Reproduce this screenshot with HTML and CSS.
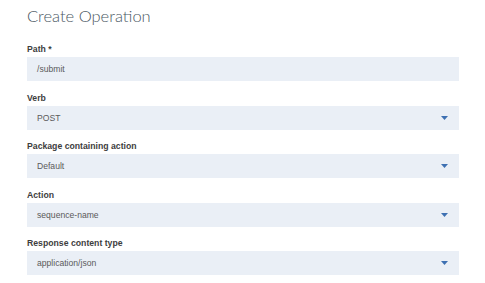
FILE: index.html
```html
<!DOCTYPE html>
<html lang="en">
<head>
  <meta charset="UTF-8">
  <meta name="viewport" content="width=device-width, initial-scale=1.0">
  <title>Create Operation</title>
  <link rel="stylesheet" href="styles.css">
</head>
<body>
  <div class="container">
    <h1>Create Operation</h1>

    <!-- Path -->
    <div class="form-item">
      <label>Path *</label>
      <div class="field">/submit</div>
    </div>

    <!-- Verb -->
    <div class="form-item">
      <label>Verb</label>
      <div class="field select">POST
        <svg class="arrow" width="7" height="4" viewBox="0 0 7 4"><path d="M0 0h7L3.5 4z" fill="#3d70b2"/></svg>
      </div>
    </div>

    <!-- Package -->
    <div class="form-item">
      <label>Package containing action</label>
      <div class="field select">Default
        <svg class="arrow" width="7" height="4" viewBox="0 0 7 4"><path d="M0 0h7L3.5 4z" fill="#3d70b2"/></svg>
      </div>
    </div>

    <!-- Action -->
    <div class="form-item">
      <label>Action</label>
      <div class="field select">sequence-name
        <svg class="arrow" width="7" height="4" viewBox="0 0 7 4"><path d="M0 0h7L3.5 4z" fill="#3d70b2"/></svg>
      </div>
    </div>

    <!-- Response content type -->
    <div class="form-item">
      <label>Response content type</label>
      <div class="field select">application/json
        <svg class="arrow" width="7" height="4" viewBox="0 0 7 4"><path d="M0 0h7L3.5 4z" fill="#3d70b2"/></svg>
      </div>
    </div>
  </div>
</body>
</html>
```

FILE: styles.css
```css
body {
  margin: 0;
  background: #fff;
  font-family: "Liberation Sans", Arial, sans-serif;
}

.container {
  width: 432px;
  padding-left: 27px;
}

h1 {
  margin: 5px 0 16px;
  font-size: 16.5px;
  line-height: 22px;
  font-weight: 300;
  font-family: Lato, "Liberation Sans", sans-serif;
  color: #4b5863;
}

.form-item {
  margin-bottom: 10.5px;
}

label {
  display: block;
  font-size: 8.7px;
  line-height: 12px;
  font-weight: bold;
  color: #3d3d3d;
  margin-bottom: 2px;
}

.field {
  display: flex;
  align-items: center;
  justify-content: space-between;
  height: 24px;
  padding: 0 11px 0 10px;
  background: #eaeff6;
  font-size: 8.6px;
  color: #5a5a5a;
}

.arrow {
  display: block;
}
```
